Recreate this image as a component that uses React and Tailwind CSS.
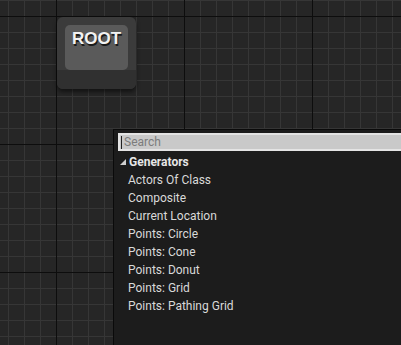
const ITEMS = [
  'Actors Of Class',
  'Composite',
  'Current Location',
  'Points: Circle',
  'Points: Cone',
  'Points: Donut',
  'Points: Grid',
  'Points: Pathing Grid',
];

function RootNode() {
  return (
    <div className="absolute left-[57px] top-[17px] w-[79px] h-[72px] rounded-[6px] bg-[#3b3b3b] shadow-[0_3px_4px_rgba(0,0,0,0.5)] flex flex-col overflow-hidden">
      <div className="flex-1 px-[8px] pt-[8px]">
        <div className="h-[45px] rounded-[5px] bg-[#5a5a5a] flex justify-center pt-[4px]">
          <span className="font-['Liberation_Sans',Arial,sans-serif] font-bold text-[17px] leading-[20px] text-[#f2f2f2] [text-shadow:1px_2px_0_#1a1a1a]">
            ROOT
          </span>
        </div>
      </div>
      <div className="h-[19px] bg-[#303030]" />
    </div>
  );
}

function ActionMenu() {
  return (
    <div className="absolute left-[113px] top-[129px] right-0 bottom-0 border-l border-t border-[#0a0a0a] bg-[#1c1c1c] pl-[4px] pt-[3px] font-['Roboto',sans-serif] text-[12px]">
      {/* search box */}
      <div className="h-[18px] -mr-[4px] border-2 border-[#e4e4e4] border-r-0 bg-[#c9c9c9] flex items-center pl-[1px]">
        <span className="w-px h-[13px] bg-[#222]" />
        <span className="ml-[2px] text-[#7c7c7c] leading-none">Search</span>
      </div>

      <div className="pt-[2px]">
        <div className="h-[18px] flex items-center">
          <svg width="10" height="10" viewBox="0 0 10 10" className="ml-[1px]">
            <polygon points="7,2 7,8 1,8" fill="#cfcfcf" />
          </svg>
          <span className="font-bold text-[#e6e6e6]">Generators</span>
        </div>
        {ITEMS.map((item) => (
          <div key={item} className="h-[18px] flex items-center pl-[10px] text-[#d9d9d9]">
            {item}
          </div>
        ))}
      </div>
    </div>
  );
}

export default function App() {
  return (
    <div className="relative w-[401px] h-[345px] overflow-hidden bg-[#262626] bg-[image:linear-gradient(to_right,#0d0d0d_1px,transparent_1px),linear-gradient(to_bottom,#0d0d0d_1px,transparent_1px),linear-gradient(to_right,#363636_1px,transparent_1px),linear-gradient(to_bottom,#363636_1px,transparent_1px)] bg-[size:128px_128px,128px_128px,16px_16px,16px_16px] bg-[position:56px_16px,56px_16px,8px_0px,8px_0px]">
      <RootNode />
      <ActionMenu />
    </div>
  );
}
